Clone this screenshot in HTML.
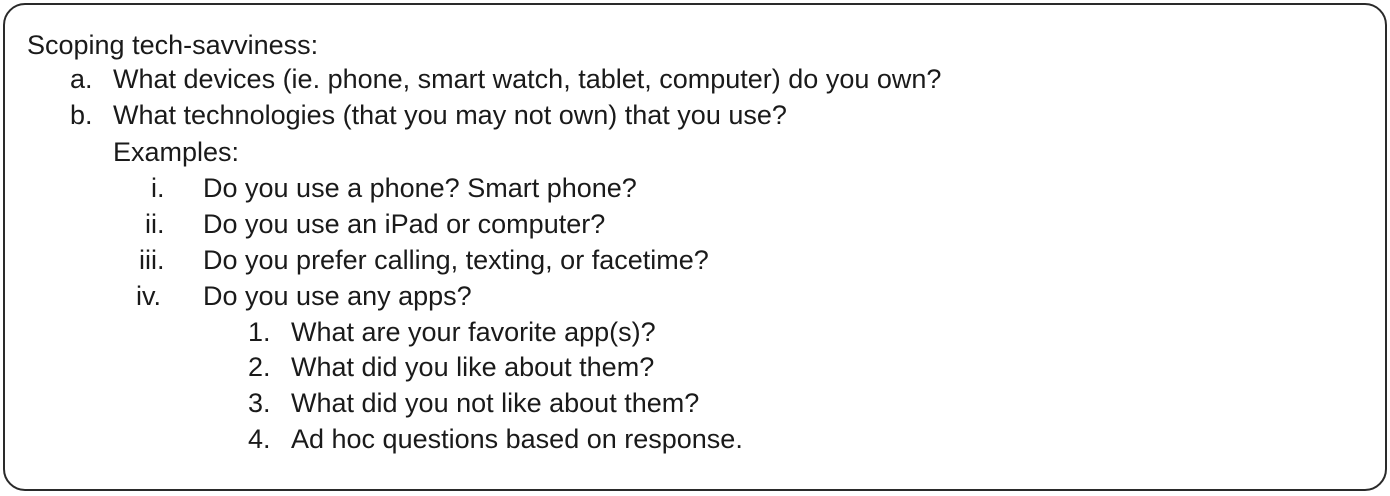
<!DOCTYPE html>
<html><head><style>
html,body{margin:0;padding:0;background:#fff;}
body{width:1390px;height:496px;position:relative;overflow:hidden;font-family:"Liberation Sans",Arial,sans-serif;font-size:27px;color:#1a1a1a;}
.box{position:absolute;left:3px;top:3px;width:1380px;height:484px;border:2px solid #2a2a2a;border-radius:22px;}
.t{position:absolute;white-space:nowrap;line-height:30px;}
</style></head><body>
<div class="box"></div>
<div class="t" style="left:27px;top:30px">Scoping tech-savviness:</div>
<div class="t" style="left:70px;top:64px">a.</div><div class="t" style="left:113px;top:64px">What devices (ie. phone, smart watch, tablet, computer) do you own?</div>
<div class="t" style="left:70px;top:100px">b.</div><div class="t" style="left:113px;top:100px">What technologies (that you may not own) that you use?</div>
<div class="t" style="left:113px;top:137px">Examples:</div>
<div class="t" style="left:151px;top:173px">i.</div><div class="t" style="left:203px;top:173px">Do you use a phone? Smart phone?</div>
<div class="t" style="left:145px;top:209px">ii.</div><div class="t" style="left:203px;top:209px">Do you use an iPad or computer?</div>
<div class="t" style="left:139px;top:245px">iii.</div><div class="t" style="left:203px;top:245px">Do you prefer calling, texting, or facetime?</div>
<div class="t" style="left:136px;top:281px">iv.</div><div class="t" style="left:203px;top:281px">Do you use any apps?</div>
<div class="t" style="left:248px;top:317px">1.</div><div class="t" style="left:291px;top:317px">What are your favorite app(s)?</div>
<div class="t" style="left:248px;top:352px">2.</div><div class="t" style="left:291px;top:352px">What did you like about them?</div>
<div class="t" style="left:248px;top:388px">3.</div><div class="t" style="left:291px;top:388px">What did you not like about them?</div>
<div class="t" style="left:248px;top:424px">4.</div><div class="t" style="left:291px;top:424px">Ad hoc questions based on response.</div>
</body></html>
